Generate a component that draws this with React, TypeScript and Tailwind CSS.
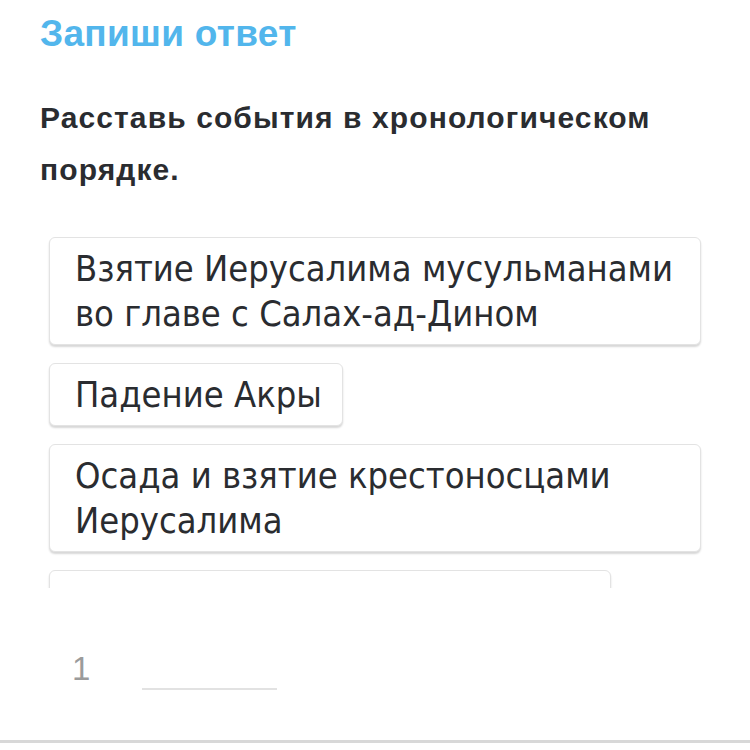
export default function App() {
  const events = [
    { text: 'Взятие Иерусалима мусульманами во главе с Салах-ад-Дином', full: true },
    { text: 'Падение Акры', full: false },
    { text: 'Осада и взятие крестоносцами Иерусалима', full: true },
    { text: 'Падение Константинополя', full: false },
  ]

  return (
    <div className="w-[750px] h-[750px] bg-white flex flex-col overflow-hidden">
      <h1 className="pl-10 pt-[12px] text-[37px] leading-[44px] tracking-[0.3px] font-bold text-[#52b6ec] font-['Liberation_Sans',Arial,sans-serif]">
        Запиши ответ
      </h1>
      <p className="pl-10 pr-10 mt-[36px] text-[30px] leading-[52px] tracking-[1.1px] font-bold text-[#2a2c30] font-['Liberation_Sans',Arial,sans-serif]">
        Расставь события в хронологическом порядке.
      </p>

      <div className="mt-[41px] ml-[45px] w-[660px] h-[351px] overflow-hidden px-1">
        <div className="flex flex-col items-start gap-[18px]">
          {events.map((ev, i) => (
            <div
              key={i}
              className={`${ev.full ? 'w-full' : ''} ${i === 3 ? 'w-[562px]' : ''} bg-white border border-[#e3e3e3] rounded-[6px] shadow-[0_2px_2px_rgba(0,0,0,0.16)] pl-[25px] pr-5 py-[8px] text-[36px] leading-[45px] text-[#2a2c30] font-['Liberation_Sans_Narrow','DejaVu_Sans_Condensed',sans-serif]`}
            >
              {ev.text}
            </div>
          ))}
        </div>
      </div>

      {/* Answer slot */}
      <div className="flex items-end mt-[62px] pl-[72px]">
        <span className="text-[33px] leading-[38px] text-[#9b9b9b] font-['Liberation_Sans',Arial,sans-serif]">1</span>
        <div className="ml-[52px] mb-[-2px] w-[135px] h-[2px] bg-[#e2e2e2]" />
      </div>

      <div className="mt-auto mb-[7px] h-[3px] bg-[#d8d8d8]" />
    </div>
  )
}
